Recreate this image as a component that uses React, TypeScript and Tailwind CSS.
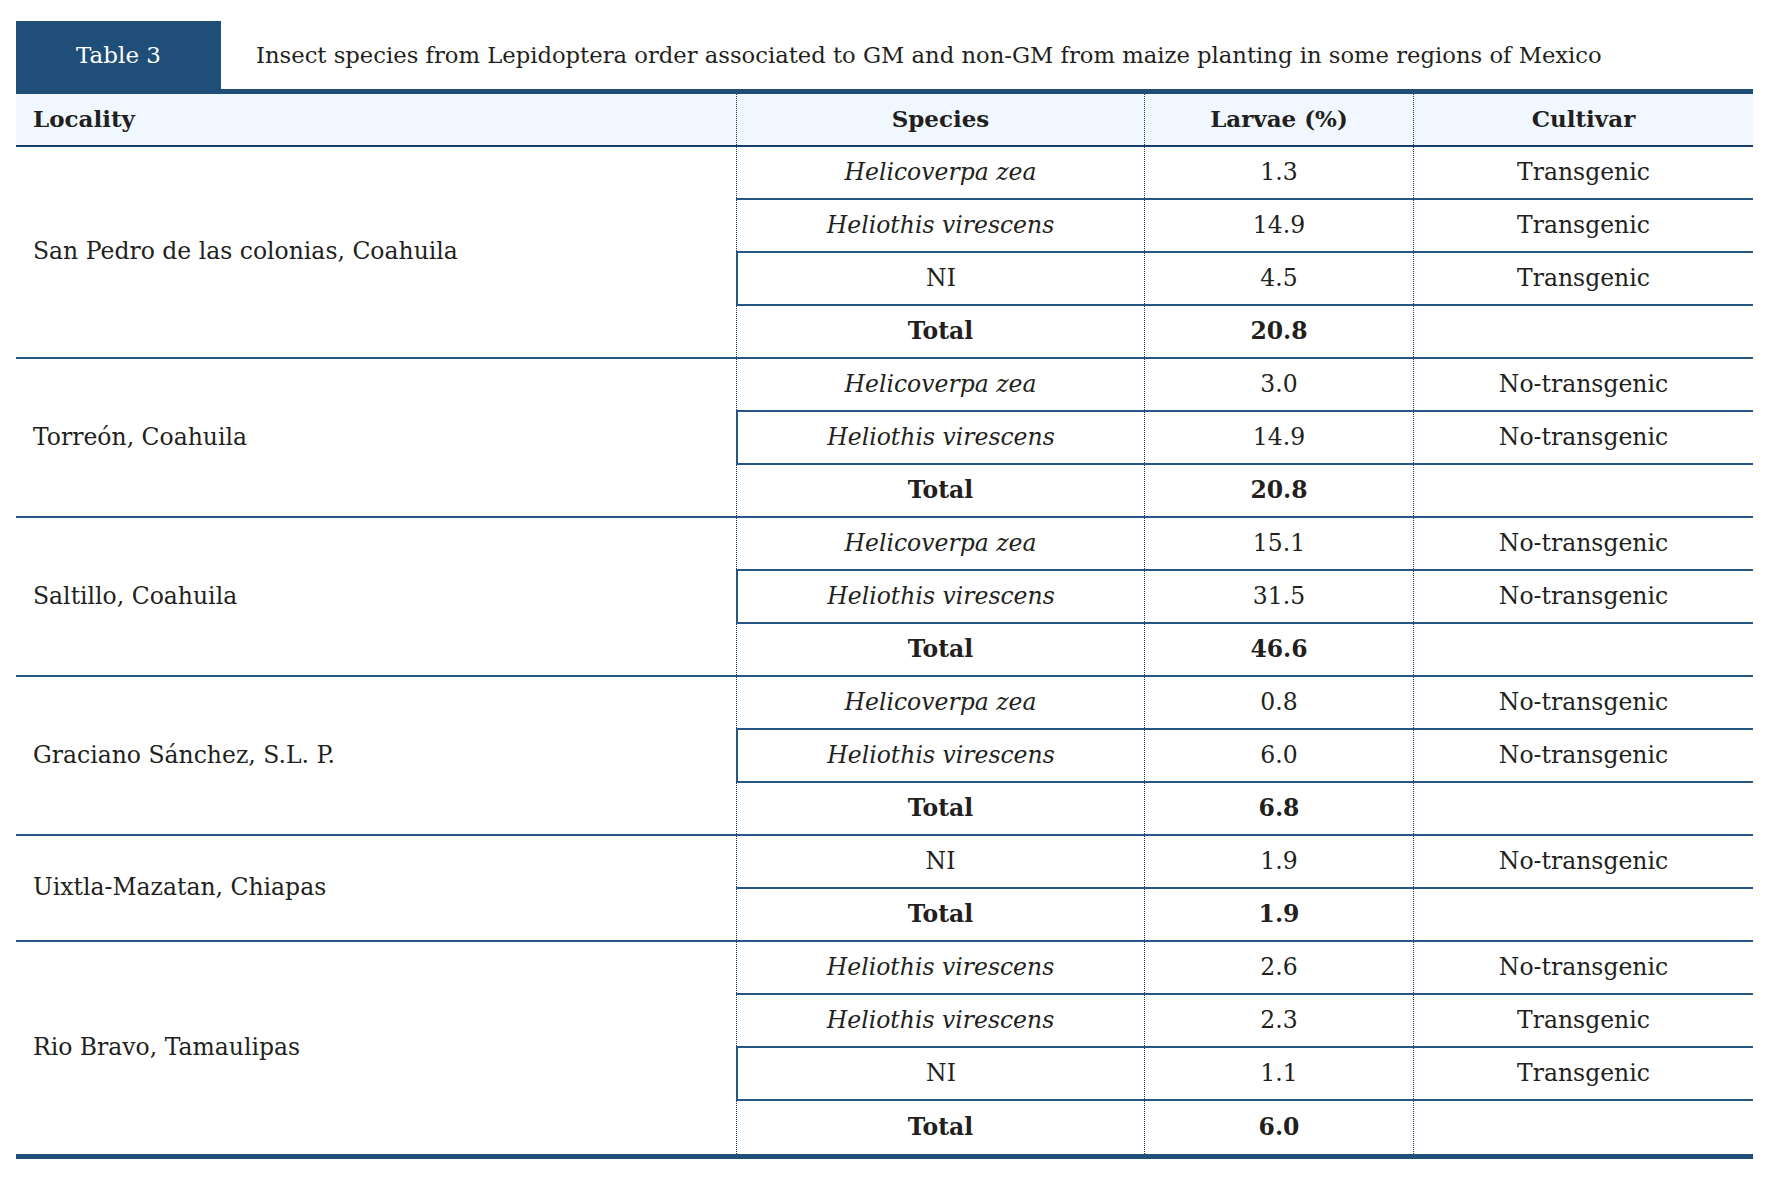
type Row = {
  species: string;
  italic?: boolean;
  larvae: string;
  cultivar?: string;
  total?: boolean;
  solid?: boolean;
};

type Group = {
  locality: string;
  rows: Row[];
};

const groups: Group[] = [
  {
    locality: "San Pedro de las colonias, Coahuila",
    rows: [
      { species: "Helicoverpa zea", italic: true, larvae: "1.3", cultivar: "Transgenic" },
      { species: "Heliothis virescens", italic: true, larvae: "14.9", cultivar: "Transgenic" },
      { species: "NI", larvae: "4.5", cultivar: "Transgenic", solid: true },
      { species: "Total", larvae: "20.8", total: true },
    ],
  },
  {
    locality: "Torreón, Coahuila",
    rows: [
      { species: "Helicoverpa zea", italic: true, larvae: "3.0", cultivar: "No-transgenic" },
      { species: "Heliothis virescens", italic: true, larvae: "14.9", cultivar: "No-transgenic", solid: true },
      { species: "Total", larvae: "20.8", total: true },
    ],
  },
  {
    locality: "Saltillo, Coahuila",
    rows: [
      { species: "Helicoverpa zea", italic: true, larvae: "15.1", cultivar: "No-transgenic" },
      { species: "Heliothis virescens", italic: true, larvae: "31.5", cultivar: "No-transgenic", solid: true },
      { species: "Total", larvae: "46.6", total: true },
    ],
  },
  {
    locality: "Graciano Sánchez, S.L. P.",
    rows: [
      { species: "Helicoverpa zea", italic: true, larvae: "0.8", cultivar: "No-transgenic" },
      { species: "Heliothis virescens", italic: true, larvae: "6.0", cultivar: "No-transgenic", solid: true },
      { species: "Total", larvae: "6.8", total: true },
    ],
  },
  {
    locality: "Uixtla-Mazatan, Chiapas",
    rows: [
      { species: "NI", larvae: "1.9", cultivar: "No-transgenic" },
      { species: "Total", larvae: "1.9", total: true },
    ],
  },
  {
    locality: "Rio Bravo, Tamaulipas",
    rows: [
      { species: "Heliothis virescens", italic: true, larvae: "2.6", cultivar: "No-transgenic" },
      { species: "Heliothis virescens", italic: true, larvae: "2.3", cultivar: "Transgenic" },
      { species: "NI", larvae: "1.1", cultivar: "Transgenic", solid: true },
      { species: "Total", larvae: "6.0", total: true },
    ],
  },
];

// one line of species / larvae / cultivar
function DataRow({ row, last }: { row: Row; last: boolean }) {
  return (
    <div className={`flex h-[53px] ${last ? "" : "border-b-2 border-[#275684]"}`}>
      <div
        className={`flex w-[408px] items-center justify-center ${
          row.solid
            ? "border-l-2 border-solid border-[#275684]"
            : "border-l border-dotted border-[#143c68]"
        } ${row.italic ? "italic" : ""} ${row.total ? "font-bold" : ""}`}
      >
        {row.species}
      </div>
      <div
        className={`flex w-[269px] items-center justify-center border-l border-dotted border-[#143c68] ${
          row.total ? "font-bold" : ""
        }`}
      >
        {row.larvae}
      </div>
      <div className="flex flex-1 items-center justify-center border-l border-dotted border-[#143c68]">
        {row.cultivar}
      </div>
    </div>
  );
}

export default function App() {
  return (
    <div className="min-h-screen bg-white px-4 pt-[21px] font-['DejaVu_Serif',serif] text-[23.5px] text-[#231f20]">
      <div className="w-[1737px]">
        {/* caption */}
        <div className="flex h-[68px]">
          <div className="flex w-[205px] items-center justify-center bg-[#1f4e79] text-[23px] text-white">
            Table 3
          </div>
          <div className="flex items-center pl-[35px] text-[22.7px]">
            Insect species from Lepidoptera order associated to GM and non-GM from maize planting in some regions of Mexico
          </div>
        </div>

        {/* header */}
        <div className="flex h-[58px] border-t-[5px] border-b-2 border-t-[#1f4e79] border-b-[#173d69] bg-[#f0f7fe] text-[23px] font-bold">
          <div className="flex w-[720px] items-center pl-[17px]">Locality</div>
          <div className="flex w-[408px] items-center justify-center border-l border-dotted border-[#143c68]">
            Species
          </div>
          <div className="flex w-[269px] items-center justify-center border-l border-dotted border-[#143c68]">
            Larvae (%)
          </div>
          <div className="flex flex-1 items-center justify-center border-l border-dotted border-[#143c68]">
            Cultivar
          </div>
        </div>

        {/* body */}
        <div className="border-b-[5px] border-[#1f4e79]">
          {groups.map((g, gi) => {
            const lastGroup = gi === groups.length - 1;
            return (
              <div key={g.locality} className="flex">
                <div
                  className={`flex w-[720px] items-center pl-[17px] ${
                    lastGroup ? "" : "border-b-2 border-[#275684]"
                  }`}
                >
                  {g.locality}
                </div>
                <div className="flex-1">
                  {g.rows.map((r, ri) => (
                    <DataRow
                      key={ri}
                      row={r}
                      last={lastGroup && ri === g.rows.length - 1}
                    />
                  ))}
                </div>
              </div>
            );
          })}
        </div>
      </div>
    </div>
  );
}
